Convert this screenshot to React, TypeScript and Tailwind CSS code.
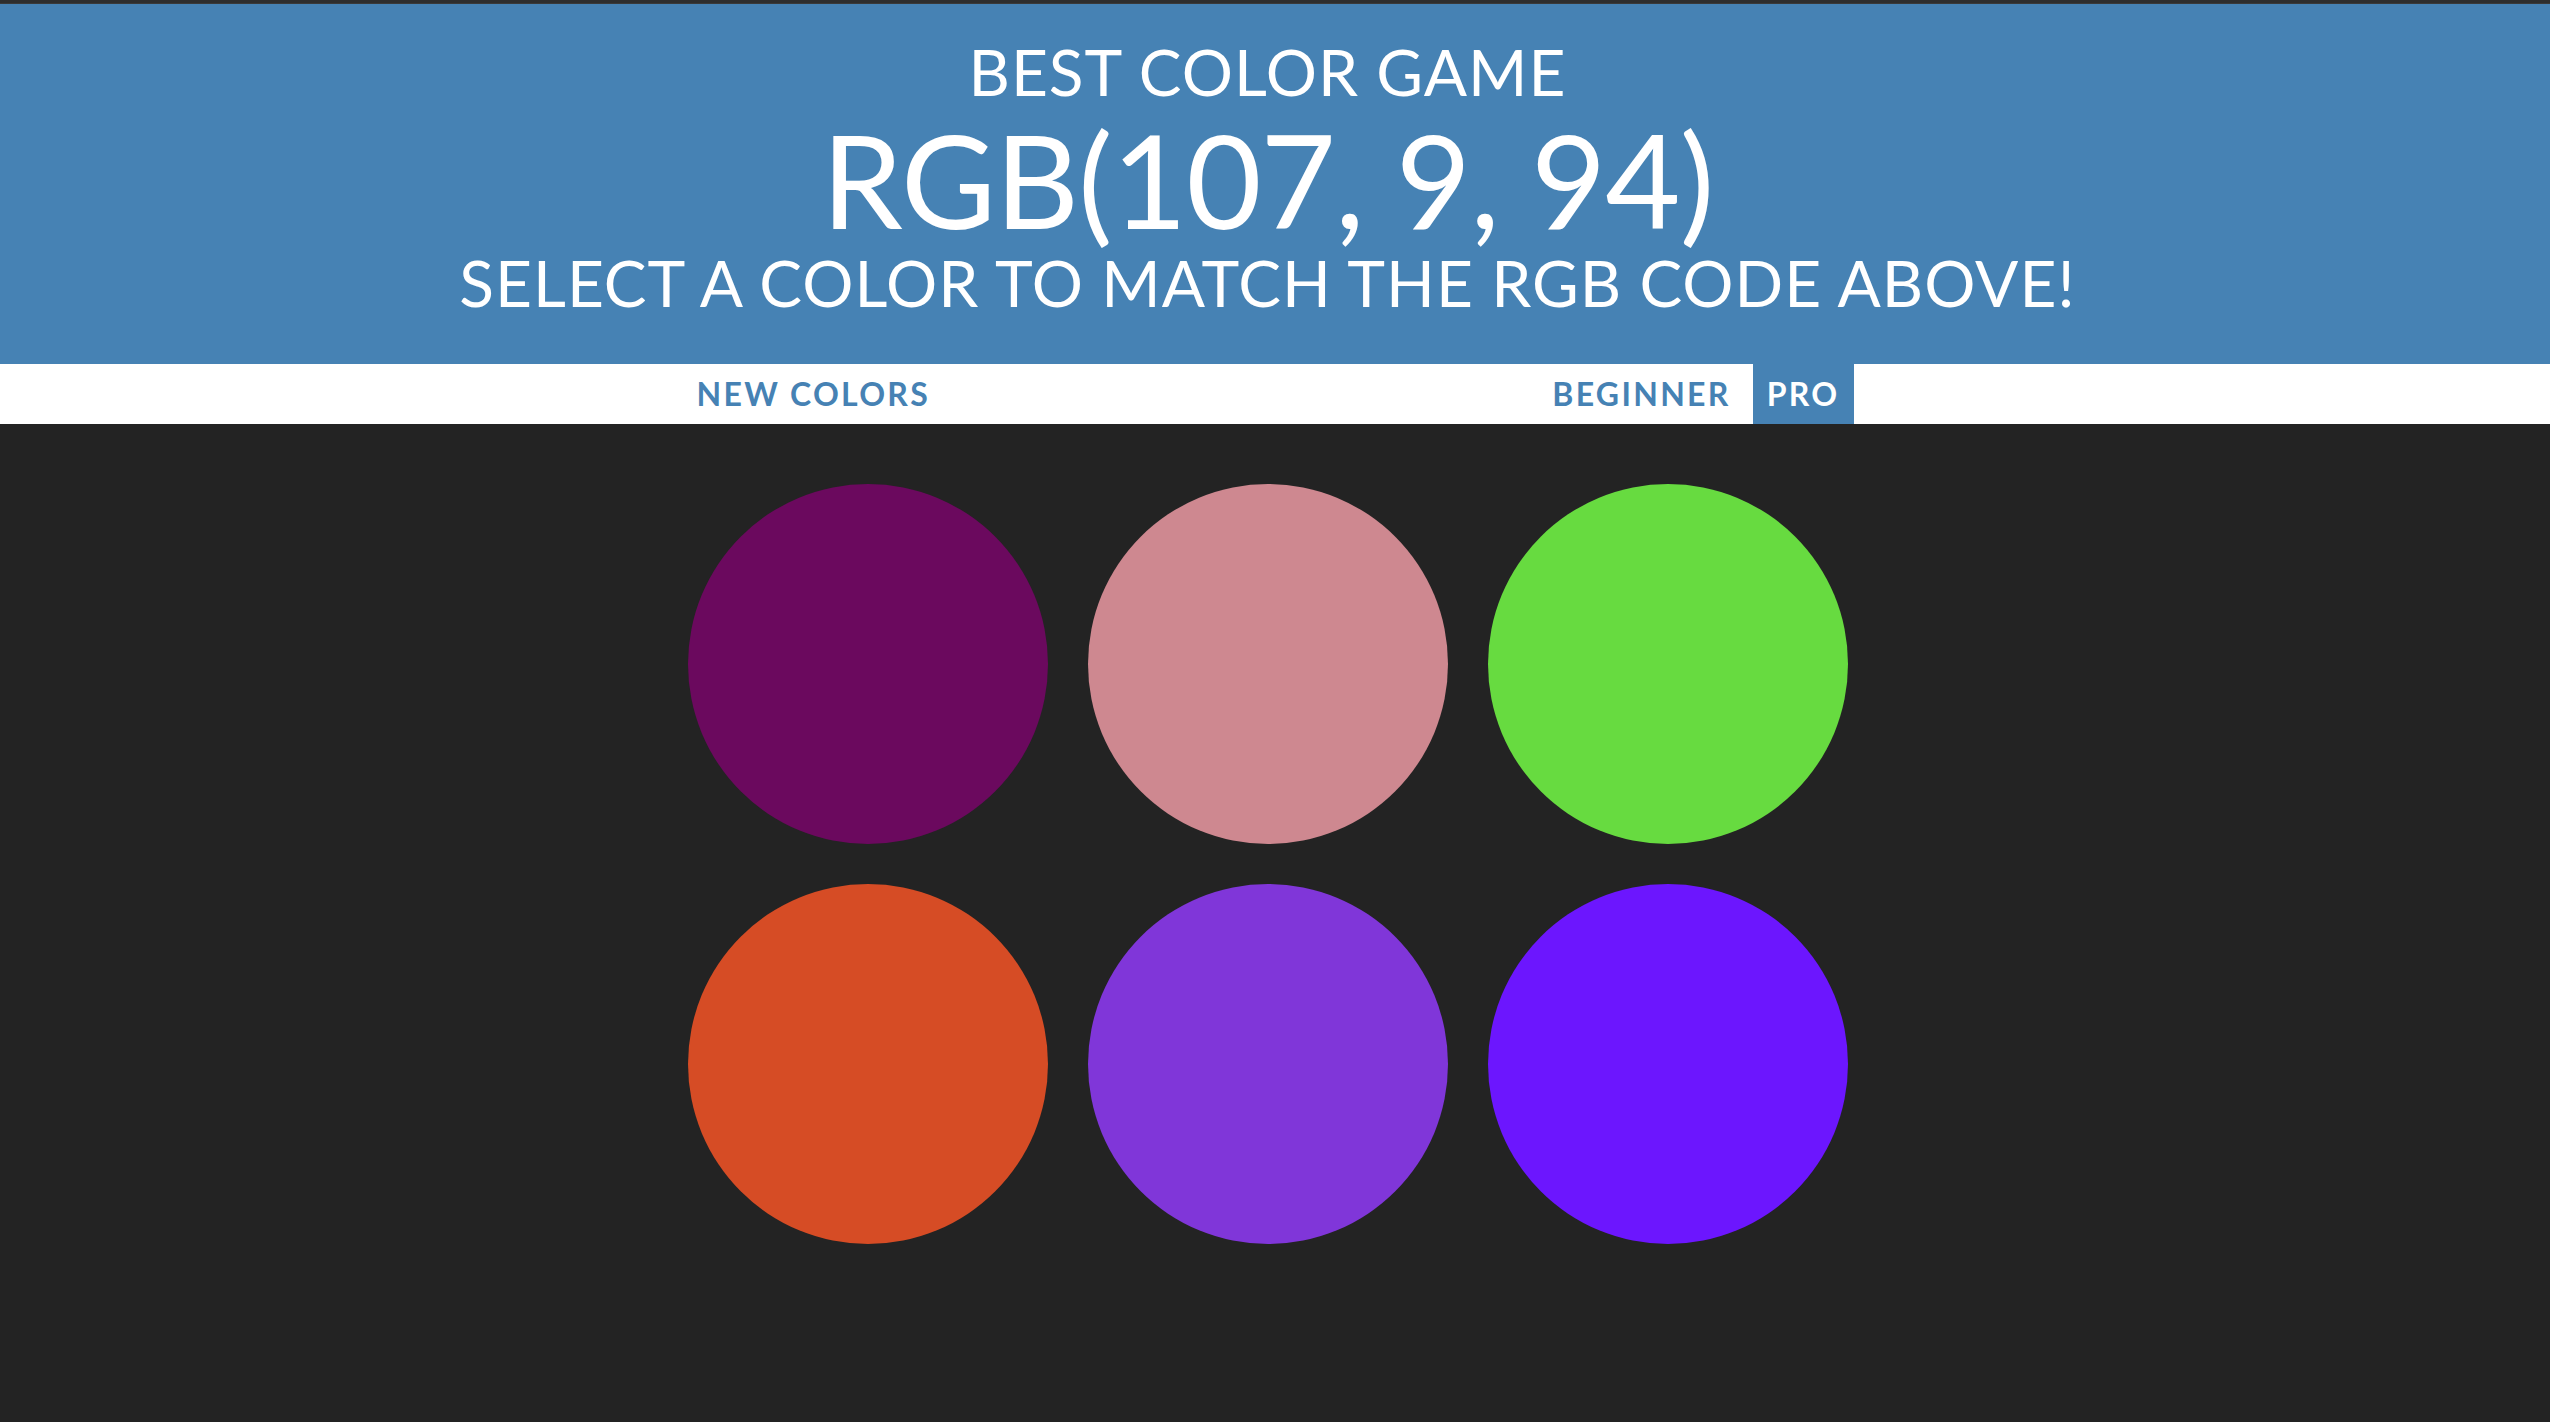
import React, { useState } from "react";

const colors = [
  "rgb(107, 9, 94)",
  "rgb(206, 136, 144)",
  "rgb(103, 219, 64)",
  "rgb(214, 76, 37)",
  "rgb(128, 54, 217)",
  "rgb(108, 22, 254)",
];

const App: React.FC = () => {
  const [mode, setMode] = useState<"easy" | "hard">("hard");

  return (
    <div className="min-h-screen bg-[#232323] font-['Lato','Open_Sans',sans-serif]">
      <div className="h-[4px] bg-[#2e2e2e] border-b border-[#3a3a3a]" />

      {/* header */}
      <div className="bg-[#4682b4] h-[360px] text-white uppercase">
        <div className="pr-[15px] flex flex-col items-center pt-[36px]">
          <h1 className="text-[64px] leading-[64px] font-normal tracking-[1px]">Best Color Game</h1>
          <div className="text-[130px] leading-[140px] mt-[5px] tracking-[-1px]">RGB(107, 9, 94)</div>
          <div className="text-[64px] leading-[60px] mt-[4px] tracking-[1px]">Select a color to match the RGB code above!</div>
        </div>
      </div>

      {/* stripe */}
      <div className="bg-white h-[60px]">
        <div className="pr-[15px] h-full">
          <div className="w-[1200px] mx-auto h-full flex items-stretch px-[14px] text-[32px] font-bold uppercase tracking-[2.3px] text-[#4682b4]">
            <button className="px-[15px] uppercase">New Colors</button>
            <div className="flex-1" />
            <button
              onClick={() => setMode("easy")}
              className={`px-[15px] uppercase ${mode === "easy" ? "bg-[#4682b4] text-white" : ""}`}
            >
              Beginner
            </button>
            <button
              onClick={() => setMode("hard")}
              className={`ml-[7px] px-[14px] uppercase ${mode === "hard" ? "bg-[#4682b4] text-white" : ""}`}
            >
              Pro
            </button>
          </div>
        </div>
      </div>

      {/* circles */}
      <div className="pr-[15px] pt-[40px]">
        <div className="w-[1200px] mx-auto grid grid-cols-3 gap-y-[40px] pt-[20px]">
          {(mode === "hard" ? colors : colors.slice(0, 3)).map((c) => (
            <div key={c} className="flex justify-center">
              <div className="w-[360px] h-[360px] rounded-full" style={{ backgroundColor: c }} />
            </div>
          ))}
        </div>
      </div>
    </div>
  );
};

export default App;
